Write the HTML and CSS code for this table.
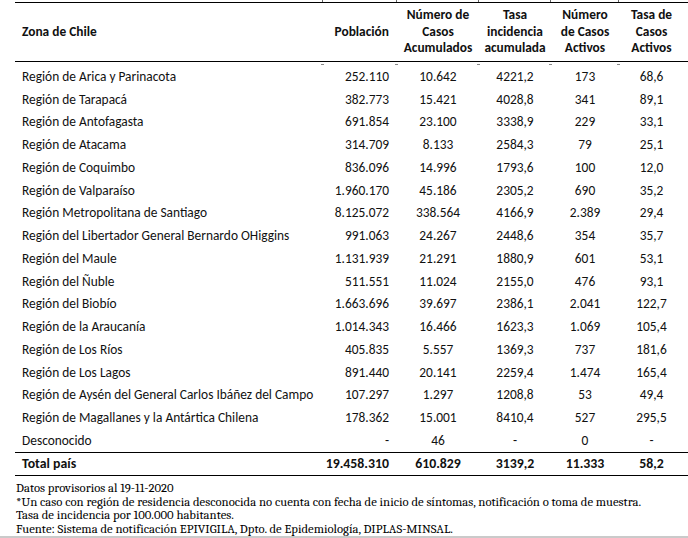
FILE: index.html
```html
<!DOCTYPE html>
<html lang="es">
<head>
<meta charset="utf-8">
<title>Casos por región</title>
<link rel="stylesheet" href="styles.css">
</head>
<body>
<div class="page">
  <table class="casos">
    <colgroup>
      <col class="c-zona"><col class="c-pob"><col class="c-acum"><col class="c-tasa"><col class="c-act"><col class="c-tact">
    </colgroup>
    <thead>
      <tr>
        <th class="zona">Zona de Chile</th>
        <th class="num">Población</th>
        <th>Número de<br>Casos<br>Acumulados</th>
        <th>Tasa<br>incidencia<br>acumulada</th>
        <th>Número<br>de Casos<br>Activos</th>
        <th class="last">Tasa de<br>Casos<br>Activos</th>
      </tr>
    </thead>
    <tbody>
      <tr><td class="zona">Región de Arica y Parinacota</td><td class="num">252.110</td><td>10.642</td><td>4221,2</td><td>173</td><td class="last">68,6</td></tr>
      <tr><td class="zona">Región de Tarapacá</td><td class="num">382.773</td><td>15.421</td><td>4028,8</td><td>341</td><td class="last">89,1</td></tr>
      <tr><td class="zona">Región de Antofagasta</td><td class="num">691.854</td><td>23.100</td><td>3338,9</td><td>229</td><td class="last">33,1</td></tr>
      <tr><td class="zona">Región de Atacama</td><td class="num">314.709</td><td>8.133</td><td>2584,3</td><td>79</td><td class="last">25,1</td></tr>
      <tr><td class="zona">Región de Coquimbo</td><td class="num">836.096</td><td>14.996</td><td>1793,6</td><td>100</td><td class="last">12,0</td></tr>
      <tr><td class="zona">Región de Valparaíso</td><td class="num">1.960.170</td><td>45.186</td><td>2305,2</td><td>690</td><td class="last">35,2</td></tr>
      <tr><td class="zona">Región Metropolitana de Santiago</td><td class="num">8.125.072</td><td>338.564</td><td>4166,9</td><td>2.389</td><td class="last">29,4</td></tr>
      <tr><td class="zona">Región del Libertador General Bernardo OHiggins</td><td class="num">991.063</td><td>24.267</td><td>2448,6</td><td>354</td><td class="last">35,7</td></tr>
      <tr><td class="zona">Región del Maule</td><td class="num">1.131.939</td><td>21.291</td><td>1880,9</td><td>601</td><td class="last">53,1</td></tr>
      <tr><td class="zona">Región del Ñuble</td><td class="num">511.551</td><td>11.024</td><td>2155,0</td><td>476</td><td class="last">93,1</td></tr>
      <tr><td class="zona">Región del Biobío</td><td class="num">1.663.696</td><td>39.697</td><td>2386,1</td><td>2.041</td><td class="last">122,7</td></tr>
      <tr><td class="zona">Región de la Araucanía</td><td class="num">1.014.343</td><td>16.466</td><td>1623,3</td><td>1.069</td><td class="last">105,4</td></tr>
      <tr><td class="zona">Región de Los Ríos</td><td class="num">405.835</td><td>5.557</td><td>1369,3</td><td>737</td><td class="last">181,6</td></tr>
      <tr><td class="zona">Región de Los Lagos</td><td class="num">891.440</td><td>20.141</td><td>2259,4</td><td>1.474</td><td class="last">165,4</td></tr>
      <tr><td class="zona">Región de Aysén del General Carlos Ibáñez del Campo</td><td class="num">107.297</td><td>1.297</td><td>1208,8</td><td>53</td><td class="last">49,4</td></tr>
      <tr><td class="zona">Región de Magallanes y la Antártica Chilena</td><td class="num">178.362</td><td>15.001</td><td>8410,4</td><td>527</td><td class="last">295,5</td></tr>
      <tr><td class="zona">Desconocido</td><td class="num">-</td><td>46</td><td>-</td><td>0</td><td class="last">-</td></tr>
    </tbody>
    <tfoot>
      <tr><td class="zona">Total país</td><td class="num">19.458.310</td><td>610.829</td><td>3139,2</td><td>11.333</td><td class="last">58,2</td></tr>
    </tfoot>
  </table>
  <div class="notas">
    <p>Datos provisorios al 19-11-2020</p>
    <p>*Un caso con región de residencia desconocida no cuenta con fecha de inicio de síntomas, notificación o toma de muestra.</p>
    <p>Tasa de incidencia por 100.000 habitantes.</p>
    <p>Fuente: Sistema de notificación EPIVIGILA, Dpto. de Epidemiología, DIPLAS-MINSAL.</p>
  </div>
  <div class="barra"></div>
</div>
</body>
</html>
```
FILE: styles.css
```css
html, body {
  margin: 0;
  padding: 0;
  background: #ffffff;
}

.page {
  padding-left: 15px;
  overflow: hidden;
  height: 538px;
  display: flex;
  flex-direction: column;
}

.casos {
  margin-top: 2px;
  width: 673px;
  border-collapse: collapse;
  table-layout: fixed;
  font-family: "Carlito", "Calibri", "Lato", sans-serif;
  font-size: 13.4px;
  color: #111111;
}

.c-zona { width: 308px; }
.c-pob { width: 74px; }
.c-acum { width: 82px; }
.c-tasa { width: 72px; }
.c-act { width: 68px; }
.c-tact { width: 69px; }

.casos thead tr {
  border-top: 1px solid #000000;
  border-bottom: 1px solid #000000;
}

.casos th {
  position: relative;
  height: 58px;
  padding: 0;
  font-weight: bold;
  line-height: 16.5px;
  text-align: center;
  vertical-align: middle;
}

.casos th:not(:first-child)::before {
  content: "";
  position: absolute;
  left: -1px;
  top: -3px;
  width: 1px;
  height: 2px;
  background: #666666;
}

.casos th:not(:first-child)::after {
  content: "";
  position: absolute;
  left: -2px;
  bottom: -4px;
  width: 3px;
  height: 1px;
  background: #888888;
}

.casos td {
  padding: 0;
  line-height: 22.73px;
  text-align: center;
  white-space: nowrap;
}

.casos .zona {
  text-align: left;
  padding-left: 7px;
}

.casos .num {
  text-align: right;
  padding-right: 8px;
}

.casos .last {
  padding-right: 4px;
}

.casos tbody tr:first-child td {
  padding-top: 4px;
}

.casos tfoot tr {
  border-top: 1px solid #000000;
  border-bottom: 1px solid #000000;
}

.casos tfoot td {
  font-weight: bold;
  font-size: 13.8px;
  line-height: 22px;
}

.notas {
  margin-top: 6px;
  padding-left: 1px;
  font-family: "Caladea", "Cambria", "DejaVu Serif", serif;
  font-size: 12.7px;
  line-height: 13.5px;
  color: #000000;
}

.notas p {
  margin: 0;
  white-space: nowrap;
}

.barra {
  margin-top: auto;
  margin-left: -15px;
  height: 3px;
  background: #cacaca;
}
```
